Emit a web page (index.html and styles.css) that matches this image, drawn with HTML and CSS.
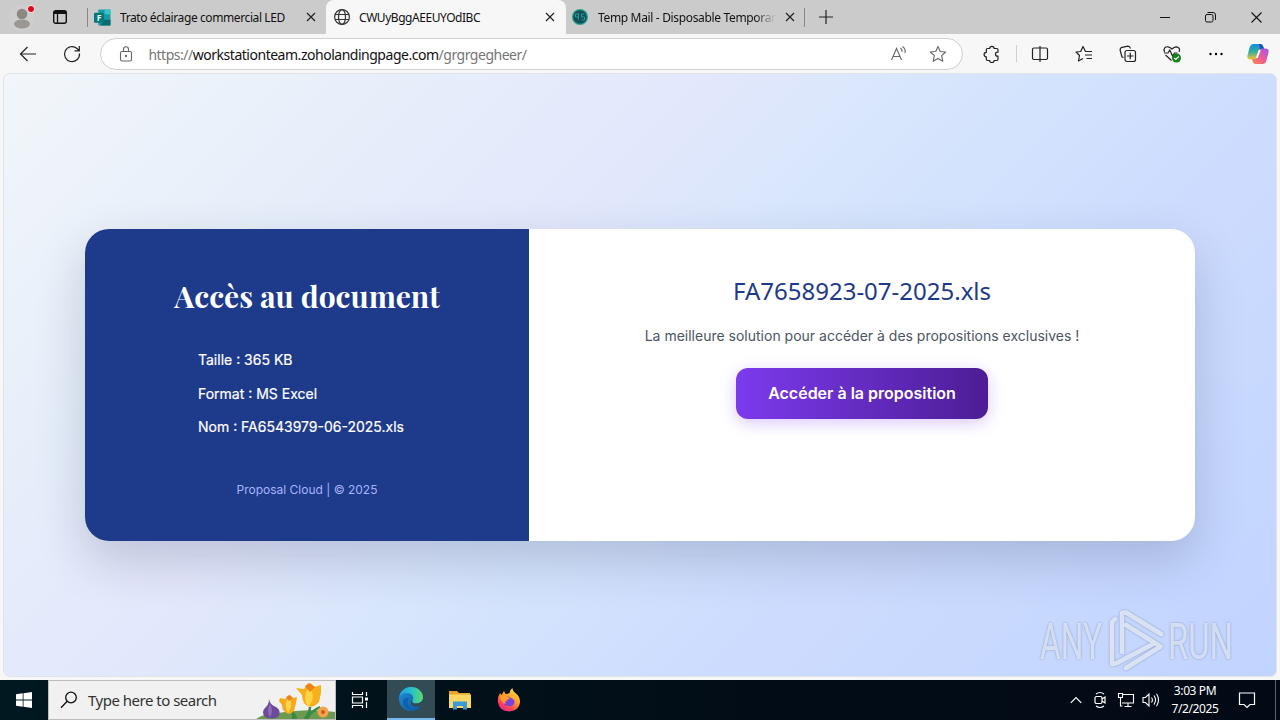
FILE: index.html
```
<!DOCTYPE html>
<html lang="en">
<head>
    <meta charset="UTF-8">
    <meta name="viewport" content="width=device-width, initial-scale=1.0">
    <title>CWUyBggAEEUYOdIBC</title>
    <link rel="stylesheet" href="styles.css">
</head>
<body>
    <div class="tabstrip">
        <div class="profile">
            <svg width="30" height="30" viewBox="0 0 30 30"><circle cx="15" cy="15" r="13" fill="#d0cecc"/><circle cx="15" cy="11" r="5.3" fill="#8c8885"/><ellipse cx="15" cy="21" rx="8" ry="4.600" fill="#9b9794"/><circle cx="24" cy="6" r="3.600" fill="#e00b1c" stroke="#eee" stroke-width="1"/></svg>
        </div>
        <div class="workspaces">
            <svg width="16" height="16" viewBox="0 0 16 16"><rect x="1.700" y="1.700" width="12.600" height="12.600" rx="2" fill="none" stroke="#111" stroke-width="1.400"/><path d="M2 2h12v3H2z" fill="#111"/><path d="M5.500 5v9" stroke="#111" stroke-width="1.300"/></svg>
        </div>
        <div class="tab tab-first">
            <svg width="17" height="17" viewBox="0 0 16 16"><rect x="4" y="0.5" width="11.500" height="15" rx="1" fill="#1a9ba1"/><path d="M10 .5h5.500V5H10z" fill="#36c5c9"/><path d="M9 10h6.500v5.500H6z" fill="#0b6a74"/><rect y="3.500" width="9.500" height="9.500" rx="1" fill="#03787c"/><text x="2.600" y="11" class="forms-letter">F</text></svg>
            <span class="tab-title t1">Trato éclairage commercial LED</span>
            <svg class="close" width="10" height="10" viewBox="0 0 10 10"><path d="M1 1l8 8M9 1L1 9" stroke="#222" stroke-width="1.200"/></svg>
        </div>
        <div class="tab active">
            <svg width="18" height="18" viewBox="0 0 18 18" fill="none" stroke="#333" stroke-width="1.200"><circle cx="9" cy="9" r="7.400"/><ellipse cx="9" cy="9" rx="3.500" ry="7.400"/><path d="M2 6.500h14M2 11.500h14"/></svg>
            <span class="tab-title t2">CWUyBggAEEUYOdIBC</span>
            <svg class="close" width="10" height="10" viewBox="0 0 10 10"><path d="M1 1l8 8M9 1L1 9" stroke="#222" stroke-width="1.200"/></svg>
        </div>
        <div class="tab tab-last">
            <svg width="16" height="16" viewBox="0 0 16 16"><circle cx="8" cy="8" r="8" fill="#27a08e"/><circle cx="8" cy="8" r="6.800" fill="#124f5a"/><path d="M6.500 5H3.500v3h3V4.500v6M12.500 5H9.500v3h3v3h-3" stroke="#2a9c94" fill="none"/></svg>
            <span class="tab-title t3">Temp Mail - Disposable Temporar</span>
            <svg class="close" width="10" height="10" viewBox="0 0 10 10"><path d="M1 1l8 8M9 1L1 9" stroke="#222" stroke-width="1.200"/></svg>
        </div>
        <div class="new-tab"><svg width="14" height="14" viewBox="0 0 14 14"><path d="M7 0v14M0 7h14" stroke="#222" stroke-width="1.200"/></svg></div>
        <div class="window-controls">
            <svg width="10" height="10" viewBox="0 0 10 10"><path d="M0 5.500h10" stroke="#111"/></svg>
            <svg width="11" height="11" viewBox="0 0 11 11" fill="none" stroke="#111"><rect x=".5" y="2.500" width="7.500" height="7.500" rx="1.500"/><path d="M2.500.5H8A2.500 2.500 0 0 1 10.500 3v5"/></svg>
            <svg width="11" height="11" viewBox="0 0 11 11"><path d="M.5.5l10 10M10.500.5l-10 10" stroke="#111" stroke-width="1.100"/></svg>
        </div>
    </div>

    <div class="toolbar">
        <div class="tool"><svg width="20" height="20" viewBox="0 0 20 20" fill="none" stroke="#222" stroke-width="1.200"><path d="M18 10H2.500M9.500 3l-7 7 7 7"/></svg></div>
        <div class="tool"><svg width="20" height="20" viewBox="0 0 20 20" fill="none" stroke="#222" stroke-width="1.200"><path d="M17.500 9.500a7.500 7.500 0 1 1-2.500-5l2 2M17.300 2v4.800h-4.800"/></svg></div>
        <div class="address">
            <svg class="lock" width="14" height="16" viewBox="0 0 14 16" fill="none" stroke="#666" stroke-width="1.100"><rect x="1.500" y="5.500" width="11" height="9.500" rx="1.500"/><path d="M4.500 5.500V3.300a2.500 2.500 0 0 1 5 0v2.200"/><circle cx="7" cy="10" r=".6" fill="#666"/></svg>
            <span class="url">https://<b>workstationteam.zoholandingpage.com</b>/grgrgegheer/</span>
            <svg width="18" height="18" viewBox="0 0 18 18" fill="none" stroke="#666" stroke-width="1.100"><path d="M1.500 15L6.500 3.500l5 11.500M3 11.500h7M10.500 3q2 1.500 1.500 4M12.500 1.500q3.500 2.500 2.500 6.500"/></svg>
            <svg width="18" height="18" viewBox="0 0 18 18" fill="none" stroke="#666" stroke-width="1.100" stroke-linejoin="round"><path d="M9 1.500l2.200 5 5.500.5-4.100 3.700 1.200 5.500L9 13.400l-4.800 2.800 1.200-5.500L1.300 7l5.500-.5z"/></svg>
        </div>
        <div class="tool"><svg width="18" height="18" viewBox="0 0 18 18" fill="none" stroke="#222" stroke-width="1.200" stroke-linejoin="round"><path d="M4.500 3.500h2.200a2.200 2.200 0 0 1 4.400 0h2.700q1.200 0 1.200 1.200V7.200h-.5a2 2 0 0 0 0 4h.5v3.100q0 1.200-1.200 1.200h-2.700a2.200 2.200 0 0 1-4.400 0H4.500q-1.200 0-1.200-1.200v-2.500a2.200 2.200 0 0 1 0-4.400V4.700q0-1.200 1.200-1.200z"/></svg></div>
        <div class="divider"></div>
        <div class="tool"><svg width="18" height="18" viewBox="0 0 18 18" fill="none" stroke="#222" stroke-width="1.200"><path d="M7 3H3a1.500 1.500 0 0 0-1.500 1.500v8.500A1.500 1.500 0 0 0 3 14.500h4M11 3h4a1.500 1.500 0 0 1 1.500 1.500v8.500a1.500 1.500 0 0 1-1.500 1.500h-4M11 3H9M7 3h2M7 14.500h4M9 1v16"/></svg></div>
        <div class="tool"><svg width="18" height="18" viewBox="0 0 18 18" fill="none" stroke="#222" stroke-width="1.200" stroke-linejoin="round"><path d="M17 6.500h-6.500L8 1.500 5.700 6.500 1 7l3.500 3.500-1 5.500L8 13.500M10 10h7M11.500 13.500H17"/></svg></div>
        <div class="tool"><svg width="18" height="18" viewBox="0 0 18 18" fill="none" stroke="#222" stroke-width="1.200"><path d="M4.500 12.500L3 12 1.200 5.500Q.8 3 3 2.300l6-1.200q1.800 0 2.500 2.400"/><rect x="6" y="5.500" width="10.500" height="11" rx="2"/><path d="M11.250 7.800v6.400M8 11h6.500"/></svg></div>
        <div class="tool"><svg width="20" height="20" viewBox="0 0 20 20" fill="none" stroke="#222" stroke-width="1.200"><path d="M2.500 8C1 4.500 3.500 2.500 6 2.800q2 .2 4 2.200 2-2 4-2.200c3 0 4.500 2.500 3 5.200M3.500 11l6 5.500M2 9h4l1.800-3 2.700 6 2-3h3"/><circle cx="14.500" cy="14" r="4.500" fill="#13801b" stroke="none"/><path d="M12.300 14l1.500 1.500 3-3" stroke="#fff"/></svg></div>
        <div class="tool"><svg width="14" height="4" viewBox="0 0 14 4"><circle cx="1.500" cy="2" r="1.200"/><circle cx="7" cy="2" r="1.200"/><circle cx="12.500" cy="2" r="1.200"/></svg></div>
        <div class="copilot">
            <svg width="22" height="22" viewBox="0 0 22 22">
                <defs>
                    <linearGradient id="cpA" x1="0" y1="0" x2="0" y2="1"><stop offset="0" stop-color="#148de0"/><stop offset=".5" stop-color="#36ad9e"/><stop offset="1" stop-color="#f5c52c"/></linearGradient>
                    <linearGradient id="cpB" x1="1" y1="0" x2="0" y2="1"><stop offset="0" stop-color="#9a55ee"/><stop offset=".5" stop-color="#ee599c"/><stop offset="1" stop-color="#fa8b3d"/></linearGradient>
                </defs>
                <path d="M6.500 1h7q2 0 2.700 2.500l.8 2.500h-2.500q-2 0-2.600 2L10 14q-.8 2.500-3 2.500H3.500q-4 0-2.900-4.500l2-7.500Q3.500 1 6.500 1z" fill="url(#cpA)"/>
                <path d="M12 1h1.500q2 0 2.700 2.500l.8 2.500h-4z" fill="#1856b4"/>
                <path d="M15.500 21h-7q-2 0-2.700-2.500L5 16h2.500q2 0 2.600-2L12 8q.8-2.500 3-2.500h3.500q4 0 2.900 4.500l-2 7.500Q18.500 21 15.500 21z" fill="url(#cpB)"/>
                <path d="M11.700 7h2l-2.900 8h-2z" fill="#fff"/>
            </svg>
        </div>
    </div>

    <div class="page">
        <div class="card">
            <div class="card-left">
                <h1>Accès au document</h1>
                <ul class="details">
                    <li>Taille : 365 KB</li>
                    <li>Format : MS Excel</li>
                    <li>Nom : FA6543979-06-2025.xls</li>
                </ul>
                <p class="copyright">Proposal Cloud | © 2025</p>
            </div>
            <div class="card-right">
                <h2>FA7658923-07-2025.xls</h2>
                <p>La meilleure solution pour accéder à des propositions exclusives !</p>
                <a class="btn">Accéder à la proposition</a>
            </div>
        </div>
        <svg class="watermark" width="216" height="68" viewBox="0 0 216 68">
            <g class="mark-text">
                <text x="6" y="53" textLength="62" lengthAdjust="spacingAndGlyphs">ANY</text>
                <text x="134" y="53" textLength="65" lengthAdjust="spacingAndGlyphs">RUN</text>
            </g>
            <path class="mark-line" d="M81 13l-3 3v42l5-1 36-19M88 46V7l4-.5L127 28M92 19l34.500 21.500L92 62"/>
        </svg>
    </div>

    <div class="taskbar">
        <div class="start"><svg width="16" height="16" viewBox="0 0 16 16" fill="#fff"><path d="M0 2.200l6.700-.9v6.200H0zM7.500 1.200L16 0v7.500H7.500zM0 8.500h6.700v6.200L0 13.800zM7.500 8.500H16V16l-8.500-1.200z"/></svg></div>
        <div class="search">
            <svg width="18" height="18" viewBox="0 0 18 18" fill="none" stroke="#111" stroke-width="1.300"><circle cx="11" cy="6.500" r="5.300"/><path d="M7.200 10.300L1 16.800"/></svg>
            <span>Type here to search</span>
            <svg class="flowers" width="82" height="38" viewBox="0 0 82 38">
                <path d="M3 38q8-6 22-6 32-5 57-1v7z" fill="#6c9a50"/>
                <path d="M40 38q1-6-3-11M52 38q5-7 5-12M54 38q3-7 13-12M43 38q-1-6-8-10" stroke="#358b46" stroke-width="2.500" fill="none"/>
                <path d="M16 18q0 6-4 9-4 4 0 9 6 3 13 0 4-6-2-10-6-2-7-8z" fill="#6c4b9b"/><path d="M17 23q-4 6 0 13 4-6 0-13z" fill="#8e6db9"/>
                <path d="M27 17l5 1 4-4 4 3 4-1-1 6-2 8q-5 6-10 0-2-2-2-6l-3-4z" fill="#f3ab1c"/><path d="M36 16q-6 7-1 16 6-8 1-16z" fill="#ffd44a"/><path d="M33 16l4-2 3 3-4 3z" fill="#e88522"/>
                <path d="M43 7l8 1 4-6 6 4 7-2v8l-2 9q-8 9-15 1-2-4-2-8z" fill="#f6b01c"/><path d="M56 6q-7 9-1 20 9-10 1-20z" fill="#ffd447"/><path d="M52 5l5-3 5 4-5 5z" fill="#ef8215"/>
                <circle cx="70" cy="31" r="5.500" fill="#f5a34a"/><circle cx="70" cy="31" r="2" fill="#c75d19"/>
            </svg>
        </div>
        <div class="app taskview"><svg width="18" height="18" viewBox="0 0 18 18" fill="none" stroke="#fff" stroke-width="1.200"><path d="M1.500 1v2.500h10V1M1.500 17v-2.500h10V17M1.500 6h10v6h-10zM15.500 1v4M15.500 11v6"/><path d="M14 6.500h3v3h-3z" fill="#fff" stroke="none"/></svg></div>
        <div class="app app-active">
            <svg width="26" height="26" viewBox="0 0 26 26">
                <defs><linearGradient id="edgeTop"><stop stop-color="#239ee3"/><stop offset=".5" stop-color="#27bfd0"/><stop offset="1" stop-color="#5bdb66"/></linearGradient><linearGradient id="edgeLow" x1="0" y1="0" x2="1" y2="1"><stop stop-color="#1b91df"/><stop offset="1" stop-color="#145394"/></linearGradient></defs>
                <circle cx="13" cy="13" r="12" fill="url(#edgeLow)"/>
                <path d="M1 12C2 5 7 1 13 1c7 0 12 5 12 10 0 4-3 6.500-7 6.500-3 0-4.500-1.500-3.500-3C17 10 13 7 9 7c-4 0-7 2-8 5z" fill="url(#edgeTop)"/>
                <path d="M14.500 14.500c-1 1.500.5 3 3.500 3 3 0 5-1 6.500-3q1.500 1.500.5 4-4 3-8.500 2-5.500-2-3-6z" fill="#334b55"/>
                <path d="M11 12q-4 6 3 10 5 1.500 9-2-5 6-12 4-7-3-6-9 2-4 6-3z" fill="#0d62ad"/>
            </svg>
        </div>
        <div class="app"><svg width="22" height="20" viewBox="0 0 22 20"><path d="M0 1h8l2 2h11v4H0z" fill="#e6a52a"/><path d="M0 4.500h22V18H0z" fill="#ffd767"/><path d="M4 19.500V11.500h14v8h-4V16H8v3.500z" fill="#3a99d8"/></svg></div>
        <div class="app">
            <svg width="24" height="24" viewBox="0 0 24 24">
                <defs><linearGradient id="fox" x1=".8" y1="0" x2=".2" y2="1"><stop stop-color="#ffe640"/><stop offset=".45" stop-color="#ff9630"/><stop offset=".8" stop-color="#ff375f"/><stop offset="1" stop-color="#e62caa"/></linearGradient></defs>
                <path d="M3 5l1.500 2L7 3l1.500 3q3 0 4-1 0-3 3-5 0 3 3.500 5.500 4.500 4 4 9-1 8-10.500 9Q2 23 .8 13.500.5 9 3 5z" fill="url(#fox)"/>
                <path d="M7 10q3-3 7 0 5 2 3 6-2 3-6 2-5-1-4-4l4-1z" fill="#7a42d8"/><path d="M3 8q5-3 8 1l2 1q-2 2-4 2-2 2 0 4-5-1-6-8z" fill="#ff9d28"/>
            </svg>
        </div>
        <div class="tray">
            <svg width="12" height="8" viewBox="0 0 12 8" fill="none" stroke="#fff" stroke-width="1.200"><path d="M.8 6.800L6 1.500l5.200 5.300"/></svg>
            <svg width="14" height="18" viewBox="0 0 14 18" fill="none" stroke="#fff" stroke-width="1.200"><path d="M3 3q4-3 8 0M3 15q4 3 8 0"/><rect x="2" y="5.500" width="7" height="7" rx="1.500"/><path d="M9 8l3-2v6l-3-2"/></svg>
            <svg width="18" height="16" viewBox="0 0 18 16" fill="none" stroke="#fff" stroke-width="1.100"><path d="M6 2.500h10.500v8.500H5M11 11v3M7.500 14.500h7M1.500 1.500h4v4h-4zM3.500 5.500V14h2"/></svg>
            <svg width="18" height="16" viewBox="0 0 18 16" fill="none" stroke="#fff" stroke-width="1.100"><path d="M1 5.500h2.500L7 2v12l-3.500-3.500H1zM9.500 5.500q1.800 2.500 0 5M12 3.500q3 4.500 0 9M14.500 1.800q4 6.200 0 12.400"/></svg>
        </div>
        <div class="clock"><span>3:03 PM</span><span>7/2/2025</span></div>
        <div class="notice"><svg width="18" height="18" viewBox="0 0 18 18" fill="none" stroke="#fff" stroke-width="1.200"><path d="M1.500 2h15v11.500H12l-3 3-3-3H1.500z"/></svg></div>
        <div class="peek"></div>
    </div>
</body>
</html>
```
FILE: styles.css
```
* {
    box-sizing: border-box;
}
body {
    margin: 0;
    width: 1280px;
    height: 720px;
    overflow: hidden;
    display: flex;
    flex-direction: column;
    background: #f7f7f7;
    font-family: "Noto Sans", "Open Sans", sans-serif;
}
svg {
    flex: none;
    display: block;
}

/* tabs */
.tabstrip {
    display: flex;
    height: 34px;
    background: #cbcbcb;
}
.profile {
    width: 44px;
    padding: 3px 0 0 7px;
}
.workspaces {
    width: 44px;
    padding: 9px 0 0 8px;
    background: linear-gradient(#888, #888) right 8px / 1px 19px no-repeat;
}
.tab {
    display: flex;
    align-items: center;
    width: 240px;
    padding: 0 11px 0 7px;
    font-size: 12px;
    color: #111;
}
.tab-first {
    width: 238px;
    padding: 0 10px 0 6px;
}
.tab.active {
    background: #f7f7f7;
    border-radius: 8px 8px 0 0;
}
.tab-last {
    width: 239px;
    padding-left: 6px;
    padding-right: 10px;
    background: linear-gradient(#888, #888) right 8px / 1px 19px no-repeat;
}
.tab-title {
    flex: 1;
    margin-left: 10px;
    margin-right: 12px;
    white-space: nowrap;
}
.t1 {
    margin-left: 9px;
    letter-spacing: -0.4px;
}
.t2 {
    margin-left: 8px;
    letter-spacing: -0.45px;
}
.t3 {
    margin-right: 8px;
    letter-spacing: -0.34px;
    color: transparent;
    background: linear-gradient(90deg, #111 88%, #bbb 98%);
    -webkit-background-clip: text;
    background-clip: text;
}
.forms-letter {
    font: bold 8px "Open Sans", sans-serif;
    fill: #fff;
}
.new-tab {
    width: 42px;
    padding: 10px 0 0 14px;
}
.window-controls {
    display: flex;
    margin-left: auto;
    align-items: center;
    gap: 35px;
    padding-right: 18px;
}

/* toolbar */
.toolbar {
    display: flex;
    align-items: center;
    height: 39px;
    padding: 0 2px 0 6px;
}
.tool {
    display: flex;
    justify-content: center;
    flex: none;
    width: 44.2px;
    padding-top: 1px;
}
.address {
    display: flex;
    align-items: center;
    flex: none;
    width: 863px;
    height: 32px;
    margin: 1px 7px 0 6px;
    padding: 0 15px 0 18px;
    gap: 21px;
    border: 1px solid #cfcfcf;
    border-radius: 16px;
    background: #fff;
}
.url {
    flex: 1;
    margin-left: -6px;
    font-size: 14px;
    letter-spacing: -0.48px;
    color: #767676;
    white-space: nowrap;
}
.url b {
    font-weight: normal;
    color: #111;
}
.divider {
    width: 1px;
    height: 17px;
    margin: 0 1px;
    background: #cfcfcf;
}
.copilot {
    margin-left: 8px;
}

/* page content */
.page {
    position: relative;
    display: flex;
    align-items: center;
    justify-content: center;
    width: 1274px;
    height: 604px;
    margin: 0 3px;
    padding-top: 20px;
    overflow: hidden;
    border-radius: 7px;
    border: 1px solid #e0e3e8;
    background: linear-gradient(135deg, #f2f6fa, #e6eefa 22%, #e4e8fc 36%, #d7e6fc 50%, #cddcfe 70%, #c1d4ff);
    font-family: Inter, sans-serif;
}
.card {
    display: flex;
    width: 1110px;
    height: 312px;
    border-radius: 24px;
    overflow: hidden;
    background: #fff;
    box-shadow: 0 20px 50px rgba(30, 41, 80, 0.2);
}
.card-left {
    display: flex;
    flex-direction: column;
    align-items: center;
    width: 444px;
    padding-top: 46px;
    background: #1e3a8a;
    color: #fff;
}
.card-left h1 {
    margin: 0;
    font: bold 30px/43px "Playfair Display", "Liberation Serif", serif;
    white-space: nowrap;
}
.details {
    width: 218px;
    margin: 32px 0 0;
    padding: 0;
    list-style: none;
    font-size: 14px;
    -webkit-text-stroke: 0.2px #fff;
}
.details li {
    height: 33.5px;
    line-height: 20px;
    white-space: nowrap;
}
.copyright {
    margin: 30px 0 0;
    font-size: 12px;
    line-height: 18px;
    color: #a5b4fc;
}
.card-right {
    display: flex;
    flex: 1;
    flex-direction: column;
    align-items: center;
    padding-top: 44px;
}
.card-right h2 {
    margin: 0;
    font: 400 24px/36px "Noto Sans", sans-serif;
    color: #1e3a8a;
}
.card-right p {
    margin: 16px 0 22px;
    font-size: 14px;
    line-height: 21px;
    color: #4b5563;
}
.btn {
    width: 252px;
    height: 51px;
    border-radius: 12px;
    background: linear-gradient(90deg, #7c3aed, #4c1d95);
    box-shadow: 0 4px 16px rgba(124, 58, 237, 0.28);
    color: #fff;
    font-size: 16px;
    font-weight: 600;
    line-height: 51px;
    text-align: center;
}

/* logo over the page corner */
.watermark {
    position: absolute;
    right: 26px;
    bottom: 2px;
    filter: drop-shadow(0 0 1px rgba(80, 95, 130, 0.6));
}
.mark-text {
    font: 50px "Roboto", sans-serif;
    fill: rgba(228, 235, 250, 0.8);
}
.mark-line {
    fill: none;
    stroke: rgba(230, 237, 252, 0.85);
    stroke-width: 4.5px;
    stroke-linecap: round;
    stroke-linejoin: round;
}

/* taskbar */
.taskbar {
    display: flex;
    height: 40px;
    margin-top: 3px;
    background: linear-gradient(90deg, #001820, #020c16 60%, #020a16);
    color: #fff;
}
.start {
    width: 48px;
    padding: 12px 0 0 16px;
}
.search {
    display: flex;
    align-items: center;
    width: 288px;
    padding-left: 11px;
    border: 1px solid #bcbcbc;
    background: #f1f1f1;
    color: #333;
    font-size: 15px;
}
.search span {
    margin-left: 10px;
    letter-spacing: -0.5px;
    white-space: nowrap;
}
.flowers {
    margin-left: auto;
}
.app {
    display: flex;
    align-items: center;
    justify-content: center;
    width: 49px;
}
.taskview {
    width: 51px;
    padding-right: 3px;
}
.app-active {
    width: 48px;
    border-bottom: 2px solid #76b9ed;
    background: #334b55;
}
.tray {
    display: flex;
    align-items: center;
    gap: 10px;
    margin-left: auto;
}
.tray svg:last-child {
    margin-left: -3px;
}
.tray svg:first-child {
    margin-right: 1px;
}
.clock {
    display: flex;
    flex-direction: column;
    align-items: center;
    width: 70px;
    padding-top: 2px;
    font-size: 12px;
    line-height: 18px;
    letter-spacing: -0.4px;
}
.notice {
    width: 45px;
    padding: 11px 0 0 8px;
}
.peek {
    width: 5px;
    border-left: 1px solid #59616a;
}
```
